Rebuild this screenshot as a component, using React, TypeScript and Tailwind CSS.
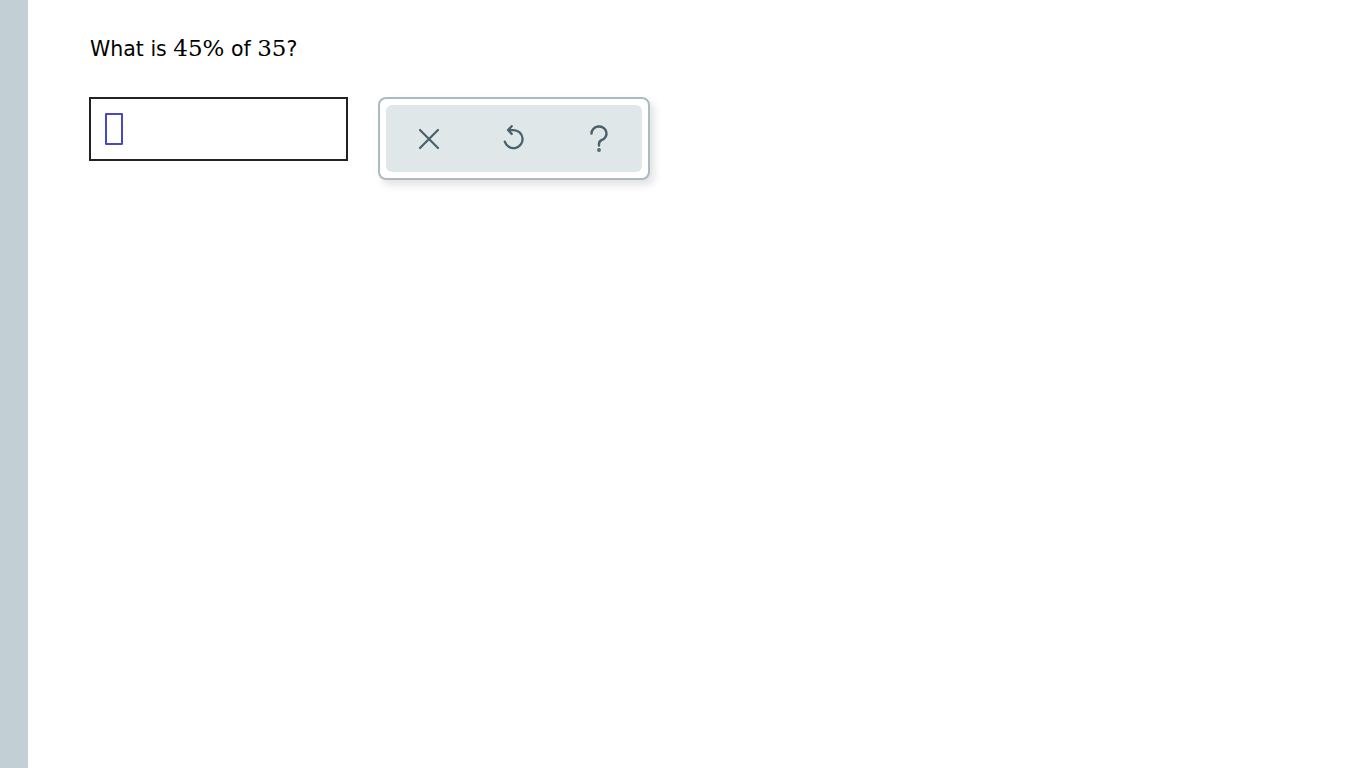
export default function App() {
  return (
    <div className="flex h-[768px] w-[1366px] bg-white">
      <div className="w-[28px] shrink-0 bg-[#c2cfd4]" />
      <div className="flex-1 pl-[61px] pt-[33px]">
        <p className="ml-px text-[20.5px] leading-[30px] text-black" style={{ fontFamily: '"DejaVu Sans", sans-serif' }}>
          What is{' '}
          <span className="text-[23px]" style={{ fontFamily: '"DejaVu Serif", serif' }}>45%</span> of{' '}
          <span className="text-[23px]" style={{ fontFamily: '"DejaVu Serif", serif' }}>35</span>?
        </p>
        <div className="mt-[33px] flex items-start">
          <div className="flex h-[64px] w-[259px] items-center border-2 border-[#222] pl-[14px]">
            <div className="h-[32px] w-[18px] rounded-[1px] border-2 border-[#4848c0]" />
          </div>
          <div className="ml-[30px] rounded-[8px] border-2 border-[#aabbc2] bg-white p-[6px] shadow-[4px_5px_8px_rgba(0,0,0,0.12)]">
            <div className="grid h-[67px] w-[256px] grid-cols-3 items-center justify-items-center rounded-[6px] bg-[#e0e7e9] text-[#46626c]">
              <svg width="22" height="22" viewBox="0 0 22 22" fill="none" stroke="currentColor" strokeWidth="2.2" strokeLinecap="round">
                <path d="M2 2l18 18M20 2L2 20" />
              </svg>
              <svg width="29" height="29" viewBox="0 0 24 24" fill="none" stroke="currentColor" strokeWidth="1.9" strokeLinecap="round" strokeLinejoin="round">
                <path d="M8 5h4a7.5 7.5 0 1 1-7.2 9.6" />
                <path d="M10.5 1.8L7.5 5l3 3.2" />
              </svg>
              <svg width="20" height="28" viewBox="0 0 20 28" fill="none" stroke="currentColor" strokeWidth="2.4" strokeLinecap="round" strokeLinejoin="round">
                <path d="M2.5 8.5a7.5 7 0 1 1 10 6.6c-1.7 .8-2.5 2-2.5 3.9v1.5" />
                <circle cx="10" cy="25" r="0.7" fill="currentColor" />
              </svg>
            </div>
          </div>
        </div>
      </div>
    </div>
  )
}
